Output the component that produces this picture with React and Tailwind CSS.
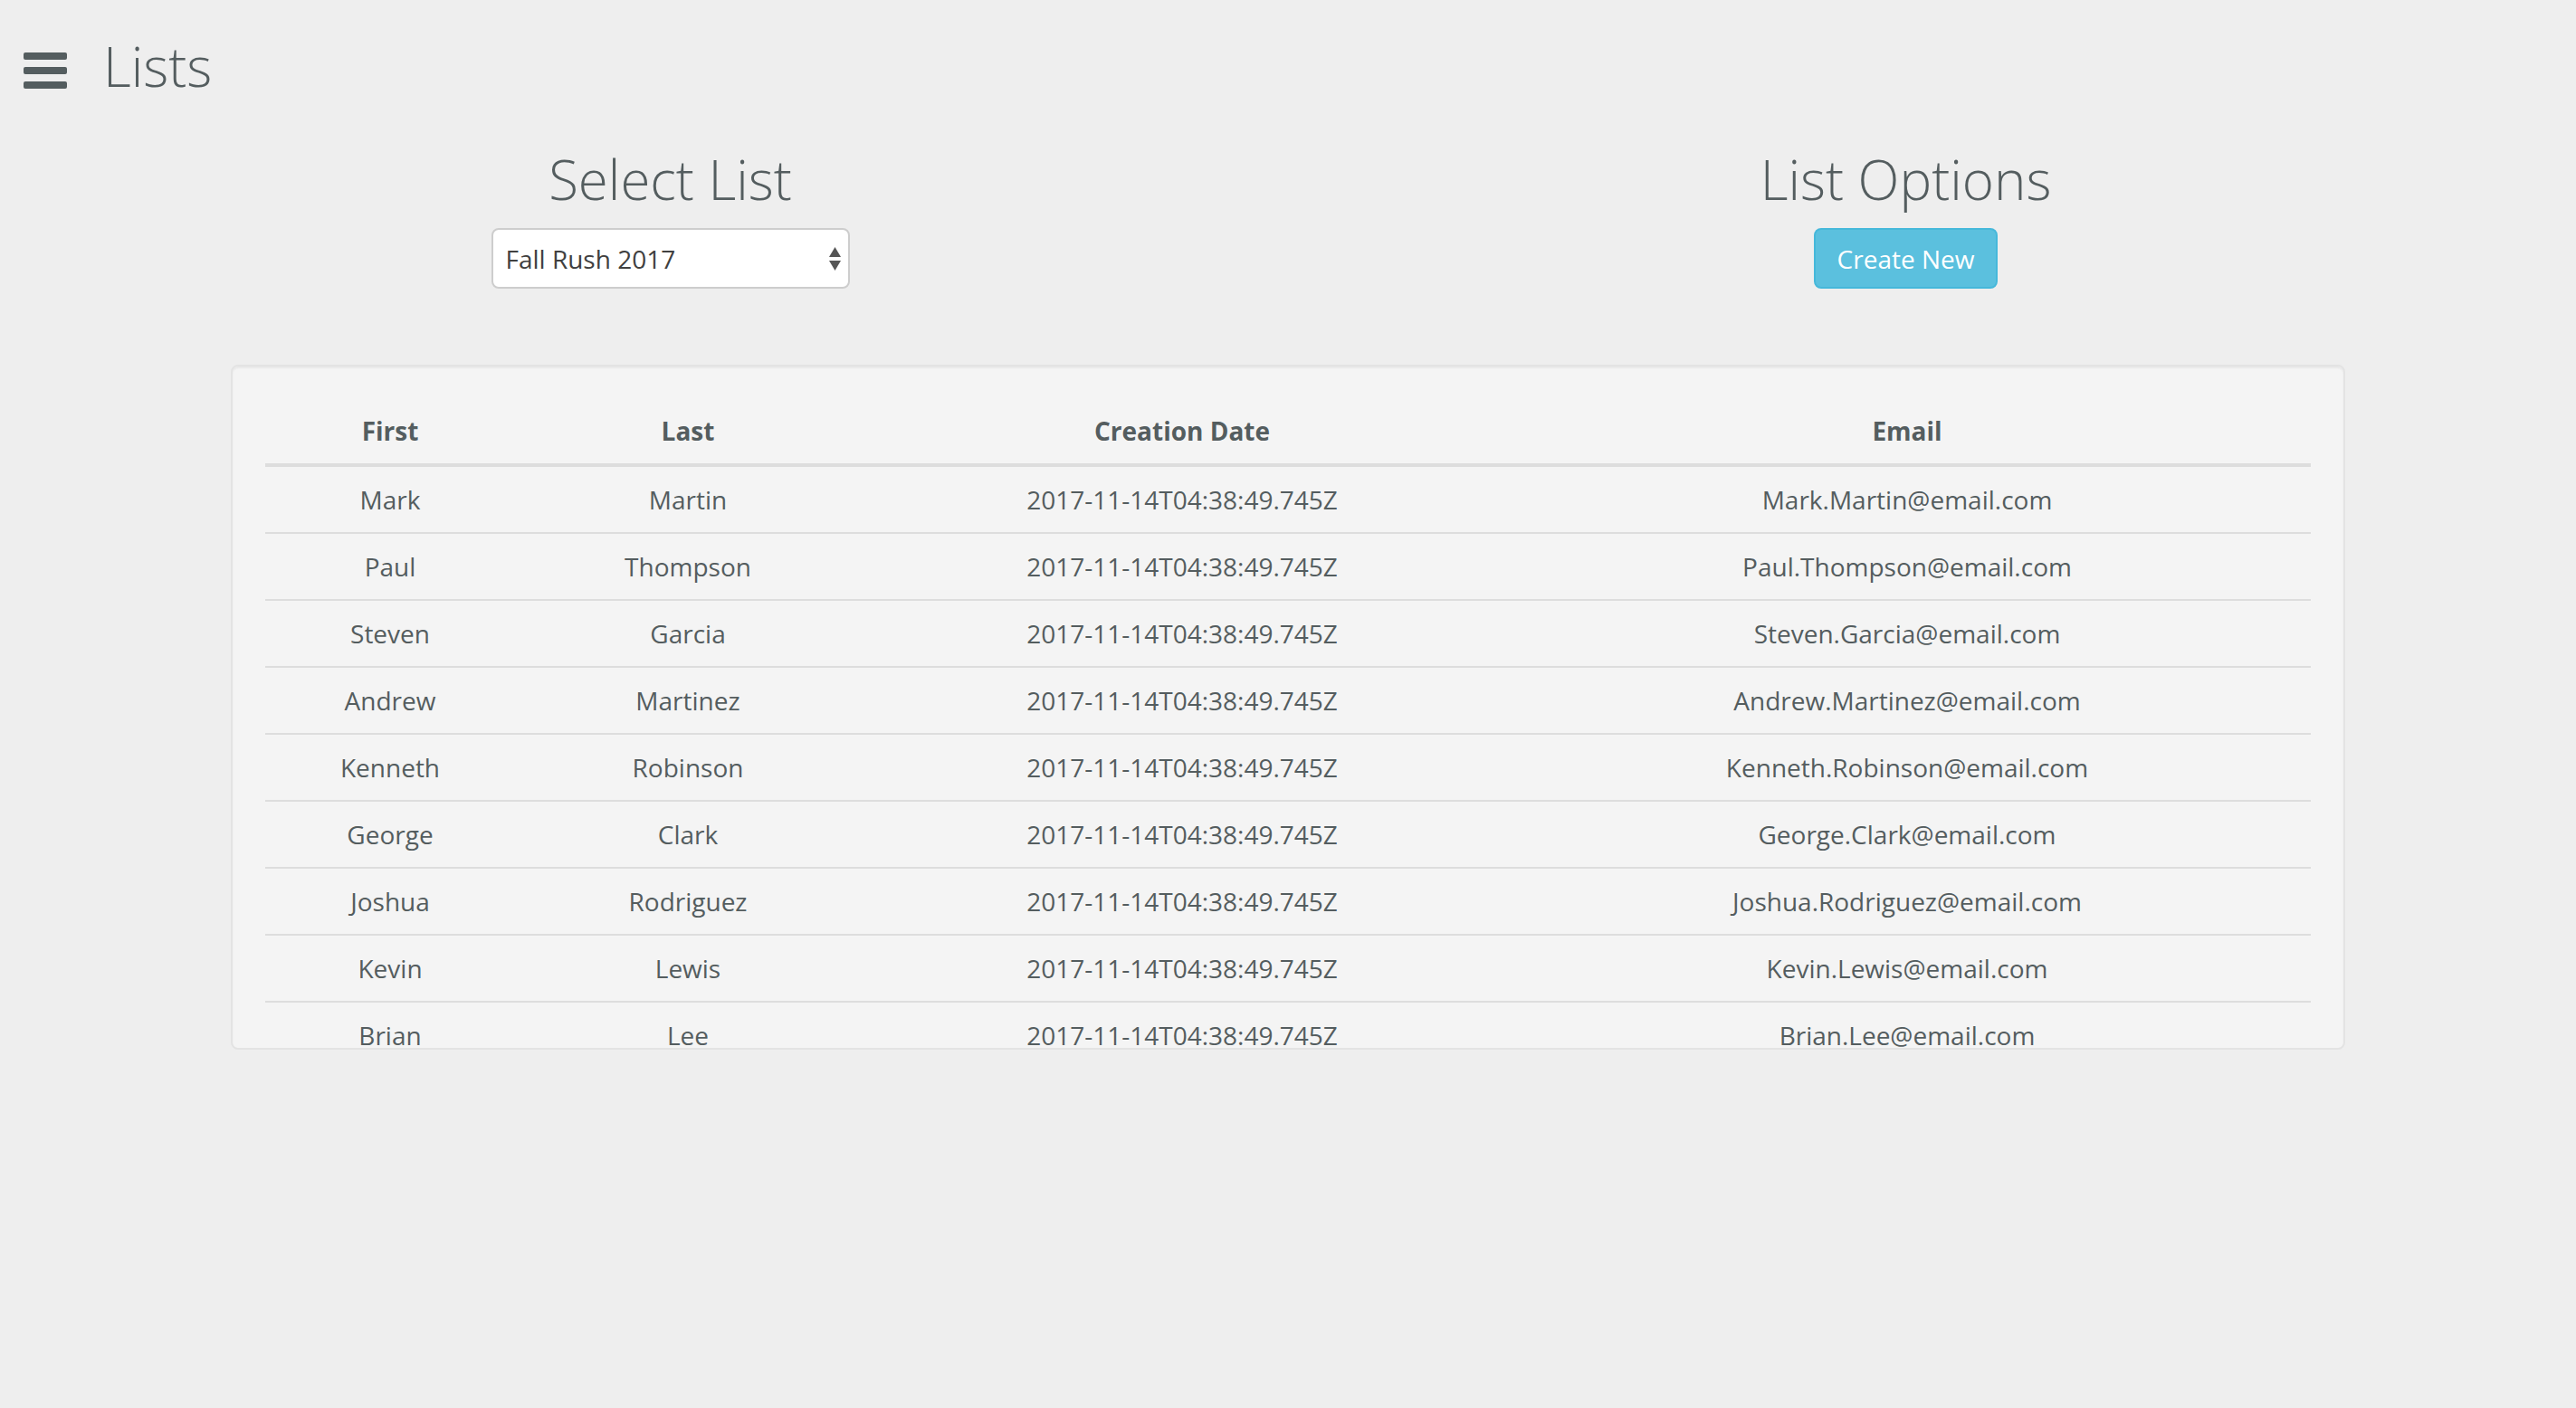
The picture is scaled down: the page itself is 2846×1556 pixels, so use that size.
import { useState } from "react";

const people = [
  ["Mark", "Martin"],
  ["Paul", "Thompson"],
  ["Steven", "Garcia"],
  ["Andrew", "Martinez"],
  ["Kenneth", "Robinson"],
  ["George", "Clark"],
  ["Joshua", "Rodriguez"],
  ["Kevin", "Lewis"],
  ["Brian", "Lee"],
];

const created = "2017-11-14T04:38:49.745Z";

function BarsIcon() {
  return (
    <svg viewBox="0 0 48 40" className="w-[48px] h-[40px] mt-[15px] shrink-0" fill="#545d5f">
      <rect x="0" y="0" width="48" height="8" rx="2" />
      <rect x="0" y="16" width="48" height="8" rx="2" />
      <rect x="0" y="32" width="48" height="8" rx="2" />
    </svg>
  );
}

function UpDown() {
  return (
    <svg viewBox="0 0 13 26" className="w-[13px] h-[26px] shrink-0" fill="#555">
      <path d="M6.5 0 L13 11 L0 11 Z" />
      <path d="M0 15 L13 15 L6.5 26 Z" />
    </svg>
  );
}

export default function App() {
  const [list, setList] = useState("fall2017");

  return (
    <div className="min-h-screen bg-[#eeeeee] text-[#545d5f] font-['Open_Sans',sans-serif]">
      <header className="flex items-start h-[163px] pt-[43px] pl-[26px]">
        <BarsIcon />
        <h1 className="ml-[40px] text-[60px] leading-[60px] font-light">Lists</h1>
      </header>

      <div className="grid grid-cols-2 px-[58px]">
        <div className="flex flex-col items-center">
          <h2 className="text-[60px] leading-[70px] font-light">Select List</h2>
          <div className="mt-[19px] flex items-center w-[396px] h-[67px] bg-white border-2 border-[#cdcdcd] rounded-[8px] pl-[14px] pr-[8px]">
            <select
              value={list}
              onChange={(e) => setList(e.target.value)}
              className="flex-1 appearance-none bg-transparent outline-none text-[28px] text-[#404040]"
            >
              <option value="fall2017">Fall Rush 2017</option>
            </select>
            <UpDown />
          </div>
        </div>
        <div className="flex flex-col items-center">
          <h2 className="text-[60px] leading-[70px] font-light">List Options</h2>
          <button className="mt-[19px] h-[67px] px-[24px] rounded-[8px] bg-[#5bc0de] border-2 border-[#46b8da] text-white text-[28px] leading-[40px]">
            Create New
          </button>
        </div>
      </div>

      <div className="mt-[84px] mx-auto w-[2336px] h-[757px] overflow-hidden bg-[#f4f4f4] border-2 border-[#e3e3e3] rounded-[8px] px-[36px] pt-[35px] shadow-[inset_0_2px_2px_rgba(0,0,0,0.05)]">
        <table className="w-full table-fixed border-collapse text-[28px] leading-[40px] text-center">
          <colgroup>
            <col className="w-[276px]" />
            <col className="w-[382px]" />
            <col className="w-[710px]" />
            <col className="w-[892px]" />
          </colgroup>
          <thead>
            <tr className="border-b-4 border-[#dddddd]">
              <th className="py-[16px] font-bold">First</th>
              <th className="py-[16px] font-bold">Last</th>
              <th className="py-[16px] font-bold">Creation Date</th>
              <th className="py-[16px] font-bold">Email</th>
            </tr>
          </thead>
          <tbody>
            {people.map(([first, last], i) => (
              <tr key={first} className={i === 0 ? "" : "border-t-2 border-[#dddddd]"}>
                <td className="py-[16px]">{first}</td>
                <td className="py-[16px]">{last}</td>
                <td className="py-[16px]">{created}</td>
                <td className="py-[16px]">{`${first}.${last}@email.com`}</td>
              </tr>
            ))}
          </tbody>
        </table>
      </div>
    </div>
  );
}
